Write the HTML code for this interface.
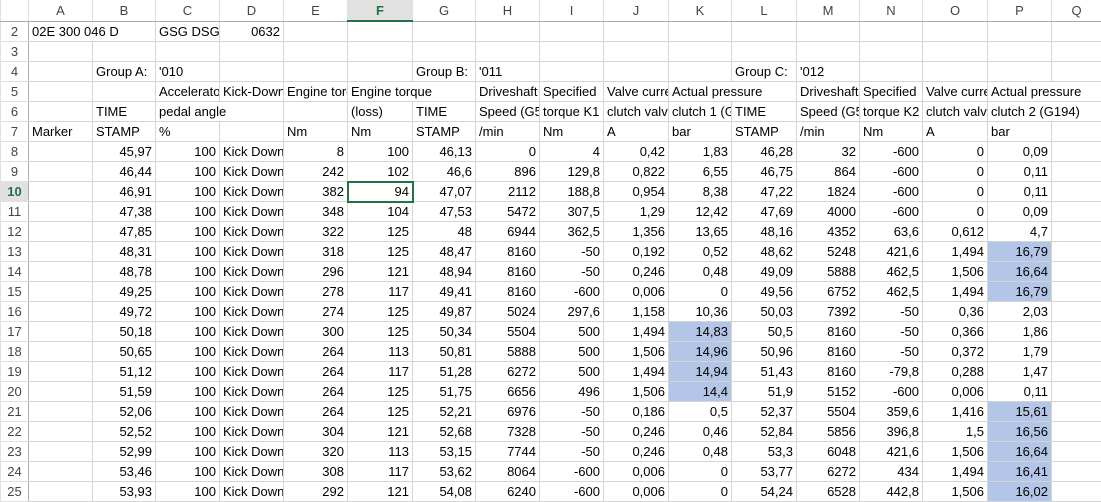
<!DOCTYPE html>
<html><head><meta charset="utf-8"><style>
body{margin:0;background:#fff;width:1101px;height:492px;overflow:hidden;font-family:"Liberation Sans",sans-serif;font-size:13px;color:#000}
table{border-collapse:collapse;table-layout:fixed;position:absolute;left:0;top:-1px;width:1101px}
td{height:19px;padding:0 3px;border:1px solid #d4d4d4;white-space:nowrap;overflow:visible;line-height:19px;text-align:right}
td.l{text-align:left}
td.c{overflow:hidden;text-align:left}
td.h{background:#fff;color:#444;text-align:center;border-color:#e0e0e0;border-bottom:1px solid #ababab;height:20px}
td.rh{color:#444;text-align:center;padding:0;border-color:#e0e0e0;border-right:1px solid #ababab}
td.hs{background:#e1e1e1;color:#217346;font-weight:bold;border-bottom:2px solid #217346}
td.rs{background:#e1e1e1;color:#217346;font-weight:bold}
td.b{background:#b4c6e7}
td.sel{outline:2px solid #217346;outline-offset:-1px}
td.e{border-left-style:hidden}
</style></head><body>
<table>
<colgroup><col style="width:28px"><col style="width:64px"><col style="width:63px"><col style="width:64px"><col style="width:64px"><col style="width:64px"><col style="width:65px"><col style="width:63px"><col style="width:64px"><col style="width:64px"><col style="width:65px"><col style="width:63px"><col style="width:65px"><col style="width:63px"><col style="width:63px"><col style="width:65px"><col style="width:64px"><col style="width:50px"></colgroup>
<tr><td class="h"></td><td class="h">A</td><td class="h">B</td><td class="h">C</td><td class="h">D</td><td class="h">E</td><td class="h hs">F</td><td class="h">G</td><td class="h">H</td><td class="h">I</td><td class="h">J</td><td class="h">K</td><td class="h">L</td><td class="h">M</td><td class="h">N</td><td class="h">O</td><td class="h">P</td><td class="h">Q</td></tr>
<tr><td class="rh">2</td><td class="l">02E 300 046 D</td><td class="e"></td><td class="l">GSG DSG</td><td>0632</td><td></td><td></td><td></td><td></td><td></td><td></td><td></td><td></td><td></td><td></td><td></td><td></td><td></td></tr>
<tr><td class="rh">3</td><td></td><td></td><td></td><td></td><td></td><td></td><td></td><td></td><td></td><td></td><td></td><td></td><td></td><td></td><td></td><td></td><td></td></tr>
<tr><td class="rh">4</td><td></td><td class="l">Group A:</td><td class="l">'010</td><td></td><td></td><td></td><td class="l">Group B:</td><td class="l">'011</td><td></td><td></td><td></td><td class="l">Group C:</td><td class="l">'012</td><td></td><td></td><td></td><td></td></tr>
<tr><td class="rh">5</td><td></td><td></td><td class="c">Accelerator</td><td class="c">Kick-Down</td><td class="c">Engine torque</td><td class="l">Engine torque</td><td class="e"></td><td class="c">Driveshaft</td><td class="c">Specified</td><td class="c">Valve current</td><td class="l">Actual pressure</td><td class="e"></td><td class="c">Driveshaft</td><td class="c">Specified</td><td class="c">Valve current</td><td class="l">Actual pressure</td><td class="e"></td></tr>
<tr><td class="rh">6</td><td></td><td class="l">TIME</td><td class="l">pedal angle</td><td class="e"></td><td></td><td class="l">(loss)</td><td class="l">TIME</td><td class="c">Speed (G5</td><td class="c">torque K1</td><td class="c">clutch valve</td><td class="c">clutch 1 (G</td><td class="l">TIME</td><td class="c">Speed (G5</td><td class="c">torque K2</td><td class="c">clutch valve</td><td class="l">clutch 2 (G194)</td><td class="e"></td></tr>
<tr><td class="rh">7</td><td class="l">Marker</td><td class="l">STAMP</td><td class="l">%</td><td></td><td class="l">Nm</td><td class="l">Nm</td><td class="l">STAMP</td><td class="l">/min</td><td class="l">Nm</td><td class="l">A</td><td class="l">bar</td><td class="l">STAMP</td><td class="l">/min</td><td class="l">Nm</td><td class="l">A</td><td class="l">bar</td><td></td></tr>
<tr><td class="rh">8</td><td></td><td>45,97</td><td>100</td><td class="c">Kick Down</td><td>8</td><td>100</td><td>46,13</td><td>0</td><td>4</td><td>0,42</td><td>1,83</td><td>46,28</td><td>32</td><td>-600</td><td>0</td><td>0,09</td><td></td></tr>
<tr><td class="rh">9</td><td></td><td>46,44</td><td>100</td><td class="c">Kick Down</td><td>242</td><td>102</td><td>46,6</td><td>896</td><td>129,8</td><td>0,822</td><td>6,55</td><td>46,75</td><td>864</td><td>-600</td><td>0</td><td>0,11</td><td></td></tr>
<tr><td class="rh rs">10</td><td></td><td>46,91</td><td>100</td><td class="c">Kick Down</td><td>382</td><td class="sel">94</td><td>47,07</td><td>2112</td><td>188,8</td><td>0,954</td><td>8,38</td><td>47,22</td><td>1824</td><td>-600</td><td>0</td><td>0,11</td><td></td></tr>
<tr><td class="rh">11</td><td></td><td>47,38</td><td>100</td><td class="c">Kick Down</td><td>348</td><td>104</td><td>47,53</td><td>5472</td><td>307,5</td><td>1,29</td><td>12,42</td><td>47,69</td><td>4000</td><td>-600</td><td>0</td><td>0,09</td><td></td></tr>
<tr><td class="rh">12</td><td></td><td>47,85</td><td>100</td><td class="c">Kick Down</td><td>322</td><td>125</td><td>48</td><td>6944</td><td>362,5</td><td>1,356</td><td>13,65</td><td>48,16</td><td>4352</td><td>63,6</td><td>0,612</td><td>4,7</td><td></td></tr>
<tr><td class="rh">13</td><td></td><td>48,31</td><td>100</td><td class="c">Kick Down</td><td>318</td><td>125</td><td>48,47</td><td>8160</td><td>-50</td><td>0,192</td><td>0,52</td><td>48,62</td><td>5248</td><td>421,6</td><td>1,494</td><td class="b">16,79</td><td></td></tr>
<tr><td class="rh">14</td><td></td><td>48,78</td><td>100</td><td class="c">Kick Down</td><td>296</td><td>121</td><td>48,94</td><td>8160</td><td>-50</td><td>0,246</td><td>0,48</td><td>49,09</td><td>5888</td><td>462,5</td><td>1,506</td><td class="b">16,64</td><td></td></tr>
<tr><td class="rh">15</td><td></td><td>49,25</td><td>100</td><td class="c">Kick Down</td><td>278</td><td>117</td><td>49,41</td><td>8160</td><td>-600</td><td>0,006</td><td>0</td><td>49,56</td><td>6752</td><td>462,5</td><td>1,494</td><td class="b">16,79</td><td></td></tr>
<tr><td class="rh">16</td><td></td><td>49,72</td><td>100</td><td class="c">Kick Down</td><td>274</td><td>125</td><td>49,87</td><td>5024</td><td>297,6</td><td>1,158</td><td>10,36</td><td>50,03</td><td>7392</td><td>-50</td><td>0,36</td><td>2,03</td><td></td></tr>
<tr><td class="rh">17</td><td></td><td>50,18</td><td>100</td><td class="c">Kick Down</td><td>300</td><td>125</td><td>50,34</td><td>5504</td><td>500</td><td>1,494</td><td class="b">14,83</td><td>50,5</td><td>8160</td><td>-50</td><td>0,366</td><td>1,86</td><td></td></tr>
<tr><td class="rh">18</td><td></td><td>50,65</td><td>100</td><td class="c">Kick Down</td><td>264</td><td>113</td><td>50,81</td><td>5888</td><td>500</td><td>1,506</td><td class="b">14,96</td><td>50,96</td><td>8160</td><td>-50</td><td>0,372</td><td>1,79</td><td></td></tr>
<tr><td class="rh">19</td><td></td><td>51,12</td><td>100</td><td class="c">Kick Down</td><td>264</td><td>117</td><td>51,28</td><td>6272</td><td>500</td><td>1,494</td><td class="b">14,94</td><td>51,43</td><td>8160</td><td>-79,8</td><td>0,288</td><td>1,47</td><td></td></tr>
<tr><td class="rh">20</td><td></td><td>51,59</td><td>100</td><td class="c">Kick Down</td><td>264</td><td>125</td><td>51,75</td><td>6656</td><td>496</td><td>1,506</td><td class="b">14,4</td><td>51,9</td><td>5152</td><td>-600</td><td>0,006</td><td>0,11</td><td></td></tr>
<tr><td class="rh">21</td><td></td><td>52,06</td><td>100</td><td class="c">Kick Down</td><td>264</td><td>125</td><td>52,21</td><td>6976</td><td>-50</td><td>0,186</td><td>0,5</td><td>52,37</td><td>5504</td><td>359,6</td><td>1,416</td><td class="b">15,61</td><td></td></tr>
<tr><td class="rh">22</td><td></td><td>52,52</td><td>100</td><td class="c">Kick Down</td><td>304</td><td>121</td><td>52,68</td><td>7328</td><td>-50</td><td>0,246</td><td>0,46</td><td>52,84</td><td>5856</td><td>396,8</td><td>1,5</td><td class="b">16,56</td><td></td></tr>
<tr><td class="rh">23</td><td></td><td>52,99</td><td>100</td><td class="c">Kick Down</td><td>320</td><td>113</td><td>53,15</td><td>7744</td><td>-50</td><td>0,246</td><td>0,48</td><td>53,3</td><td>6048</td><td>421,6</td><td>1,506</td><td class="b">16,64</td><td></td></tr>
<tr><td class="rh">24</td><td></td><td>53,46</td><td>100</td><td class="c">Kick Down</td><td>308</td><td>117</td><td>53,62</td><td>8064</td><td>-600</td><td>0,006</td><td>0</td><td>53,77</td><td>6272</td><td>434</td><td>1,494</td><td class="b">16,41</td><td></td></tr>
<tr><td class="rh">25</td><td></td><td>53,93</td><td>100</td><td class="c">Kick Down</td><td>292</td><td>121</td><td>54,08</td><td>6240</td><td>-600</td><td>0,006</td><td>0</td><td>54,24</td><td>6528</td><td>442,8</td><td>1,506</td><td class="b">16,02</td><td></td></tr>
</table>
</body></html>
